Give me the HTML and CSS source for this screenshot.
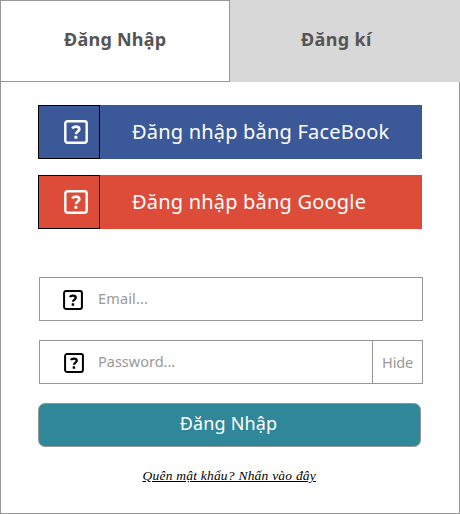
FILE: index.html
```
<!DOCTYPE html>
<html lang="vi">
<head>
<meta charset="utf-8">
<title>Đăng Nhập</title>
<link rel="stylesheet" href="styles.css">
</head>
<body>
<svg class="defs" width="0" height="0" aria-hidden="true">
  <symbol id="help" viewBox="0 0 24 24">
    <rect x="1.3" y="1.3" width="21.4" height="21.4" rx="2.2" fill="none" stroke="currentColor" stroke-width="2.4"/>
    <path d="M8.3 8.5C9 7.2 10.2 6.6 11.8 6.6c2.1 0 3.5 1 3.5 2.6 0 2.3-3.2 2.3-3.3 4.9" fill="none" stroke="currentColor" stroke-width="2.7"/>
    <rect x="10.4" y="15.8" width="3" height="3" rx=".6" fill="currentColor"/>
  </symbol>
</svg>
<main class="panel">
  <nav class="tabs">
    <a class="tab tab-active">Đăng Nhập</a>
    <a class="tab">Đăng kí</a>
  </nav>
  <form class="form">
    <div class="social facebook">
      <span class="social-icon"><svg><use href="#help"/></svg></span>
      <span>Đăng nhập bằng FaceBook</span>
    </div>
    <div class="social google">
      <span class="social-icon"><svg><use href="#help"/></svg></span>
      <span>Đăng nhập bằng Google</span>
    </div>
    <div class="field email">
      <svg><use href="#help"/></svg>
      <span>Email...</span>
    </div>
    <div class="field password">
      <svg><use href="#help"/></svg>
      <span>Password...</span>
      <span class="hide">Hide</span>
    </div>
    <div class="submit">Đăng Nhập</div>
    <a class="forgot">Quên mật khẩu? Nhấn vào đây</a>
  </form>
</main>
</body>
</html>
```

FILE: styles.css
```
* { box-sizing: border-box; }
body { margin: 0; background: #fff; font-family: "Noto Sans", sans-serif; }
.defs { display: block; height: 0; }
.panel { width: 460px; height: 514px; border: 1px solid #979797; }
.tabs { display: flex; margin: -1px; height: 82px; }
.tab { flex: none; width: 230px; padding: 26px 0 0 71px; background: #d8d8d8; color: #555; font-size: 18px; font-weight: 700; line-height: 26px; letter-spacing: .35px; white-space: nowrap; }
.tab-active { background: #fff; border: 1px solid #979797; padding: 25px 0 0 63px; letter-spacing: .25px; }
.form { display: flex; flex-direction: column; padding: 24px 37px 0; }
.social { display: flex; align-items: center; height: 54px; margin-bottom: 16px; color: #fff; font-size: 20px; line-height: 54px; letter-spacing: .2px; white-space: nowrap; }
.social-icon { display: flex; align-items: center; width: 62px; height: 54px; border: 1px solid #000; padding-left: 25px; margin-right: 32px; }
.social svg { width: 24px; height: 24px; flex: none; margin-bottom: 1px; }
.facebook { background: #3b5998; }
.google { background: #dd4b39; }
.field { display: flex; align-items: center; width: 384px; height: 44px; margin-left: 1px; border: 1px solid #979797; color: #999; font-size: 14.5px; line-height: 42px; white-space: nowrap; }
.field > svg { width: 20px; height: 20px; flex: none; margin: 1px 15px 0 22.5px; color: #000; }
.field > span { margin: -2px 0 0 .5px; }
.email { margin-top: 32px; margin-bottom: 19px; letter-spacing: .15px; }
.password > svg { margin: 1px 14px 0 23.5px; }
.field > .hide { width: 50px; height: 42px; margin: 0 0 0 auto; border-left: 1px solid #979797; line-height: 43px; text-align: center; letter-spacing: -.2px; }
.submit { width: 383px; height: 44px; margin-top: 19px; border: 1px solid #979797; border-radius: 7px; background: #2f8799; color: #fff; font-size: 18px; line-height: 39px; letter-spacing: .15px; text-align: center; text-indent: -2px; }
.forgot { margin: 20px 0 0 104.5px; color: #000; font: italic 13.5px/18px "Liberation Serif", serif; letter-spacing: .22px; text-decoration: underline; white-space: nowrap; }
```
